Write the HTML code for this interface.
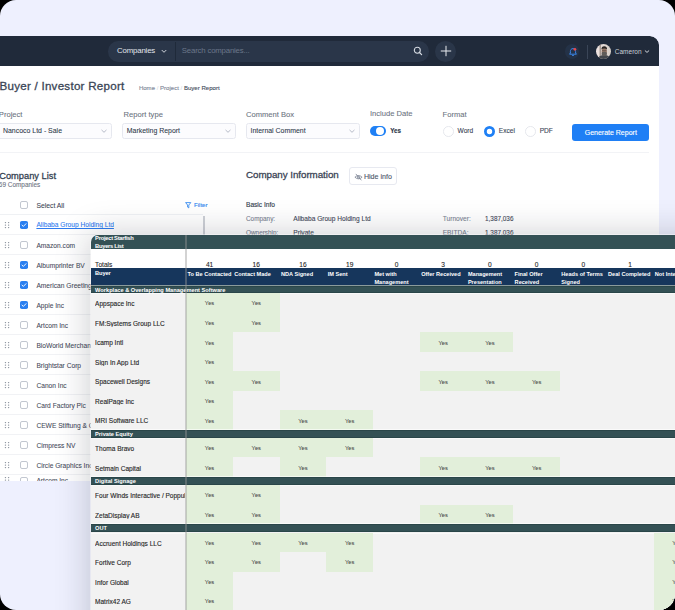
<!DOCTYPE html>
<html><head><meta charset="utf-8"><style>
html,body{margin:0;padding:0;background:#000;width:675px;height:610px;overflow:hidden;}
#frame{position:absolute;left:0;top:0;width:675px;height:610px;border-radius:16px;overflow:hidden;background:#EEF0FE;}
.r{position:absolute;}
.t{position:absolute;white-space:nowrap;line-height:1;font-family:"Liberation Sans", sans-serif;}
</style></head><body><div id="frame">
<div id="dash" style="position:absolute;left:0;top:36px;width:659px;height:445px;overflow:hidden;border-top-right-radius:9px;"><div style="position:absolute;left:0;top:-36px;width:675px;height:610px;"><div class="r" style="left:-20.00px;top:36.00px;width:679.00px;height:30.00px;background:#202A3A;border-top-right-radius:9px;"></div><div class="r" style="left:-20.00px;top:66.00px;width:679.00px;height:415.00px;background:#FFFFFF;"></div><div class="r" style="left:108.00px;top:41.00px;width:321.00px;height:20.50px;background:#2A3649;border-radius:10.25px;"></div><div class="r" style="left:175.00px;top:42.00px;width:1.00px;height:18.50px;background:#1F2A3A;"></div><div class="t" style="left:117.00px;top:46.86px;font-size:7.8px;color:#E2E6EC;font-weight:400;letter-spacing:-0.15px;">Companies</div><svg class="r" style="left:161px;top:48.5px" width="6" height="5" viewBox="0 0 6 5"><path d="M1 1.3 L3 3.3 L5 1.3" fill="none" stroke="#E2E6EC" stroke-width="0.9" stroke-linecap="round" stroke-linejoin="round"/></svg><div class="t" style="left:181.80px;top:47.01px;font-size:7.8px;color:#6B778A;font-weight:400;letter-spacing:-0.18px;">Search companies...</div><svg class="r" style="left:413px;top:46px" width="10" height="10" viewBox="0 0 10 10"><circle cx="4.3" cy="4.3" r="3" fill="none" stroke="#D5DAE1" stroke-width="1.1"/><path d="M6.5 6.5 L8.6 8.6" stroke="#D5DAE1" stroke-width="1.2" stroke-linecap="round"/></svg><div class="r" style="left:435.00px;top:40.80px;width:21.00px;height:21.00px;background:#2A3649;border-radius:50%;"></div><svg class="r" style="left:439.5px;top:45.3px" width="12" height="12" viewBox="0 0 12 12"><path d="M6 1.2 V10.8 M1.2 6 H10.8" stroke="#E8EBF0" stroke-width="1.0" stroke-linecap="round"/></svg><div class="r" style="left:564.70px;top:44.10px;width:14.80px;height:14.80px;background:#243247;border-radius:50%;"></div><svg class="r" style="left:567.5px;top:46.5px" width="10" height="10" viewBox="0 0 10 10"><path d="M5 1.6 C3.2 1.6 2.4 3 2.4 4.4 L2.4 6 L1.6 7.2 L8.4 7.2 L7.6 6 L7.6 4.4 C7.6 3 6.8 1.6 5 1.6 Z" fill="none" stroke="#3A86E8" stroke-width="1" stroke-linejoin="round"/><path d="M4 8.2 Q5 9.2 6 8.2" fill="none" stroke="#3A86E8" stroke-width="0.9"/><circle cx="6.9" cy="2.3" r="1.4" fill="#E5484D"/></svg><div class="r" style="left:587.30px;top:44.60px;width:0.80px;height:14.00px;background:#3A4557;"></div><svg class="r" style="left:595.6px;top:44.3px" width="15" height="15" viewBox="0 0 30 30"><defs><clipPath id="av"><circle cx="15" cy="15" r="15"/></clipPath><linearGradient id="avbg" x1="0" x2="1"><stop offset="0" stop-color="#EFE4E2"/><stop offset="1" stop-color="#D6CEC6"/></linearGradient></defs><g clip-path="url(#av)"><rect width="30" height="30" fill="url(#avbg)"/><rect x="7" y="0" width="3" height="30" fill="#6E5E55" opacity="0.55"/><ellipse cx="16.5" cy="31" rx="13" ry="9" fill="#43474C"/><ellipse cx="16.5" cy="14.5" rx="5.2" ry="7" fill="#967766"/><ellipse cx="16.5" cy="19.5" rx="5.4" ry="4.6" fill="#5F5C59"/><path d="M10.8 11 Q11 4.5 16.5 4.5 Q22 4.5 22.2 11 Q19 8.5 16.5 8.8 Q13.5 8.5 10.8 11 Z" fill="#2A2522"/><rect x="12" y="12" width="9" height="1.3" fill="#3A3430" opacity="0.6"/></g></svg><div class="t" style="left:614.80px;top:48.68px;font-size:6.5px;color:#C9CED6;font-weight:400;">Cameron</div><svg class="r" style="left:644px;top:49px" width="6" height="5" viewBox="0 0 6 5"><path d="M1.2 1.8 L3 3.4 L4.8 1.8" fill="none" stroke="#E2E6EC" stroke-width="0.9" stroke-linecap="round" stroke-linejoin="round"/></svg><div class="t" style="left:-0.50px;top:80.48px;font-size:11.6px;color:#3A4556;font-weight:400;letter-spacing:0.25px;-webkit-text-stroke:0.3px #3A4556;">Buyer / Investor Report</div><div class="t" style="left:138.90px;top:85.40px;font-size:6.05px;color:#858D9C;font-weight:400;-webkit-text-stroke:0.15px #858D9C;">Home <span style="color:#D0D4DB;-webkit-text-stroke:0">/</span> Project <span style="color:#D0D4DB;-webkit-text-stroke:0">/</span> <span style="color:#454E5E;-webkit-text-stroke:0.12px #454E5E">Buyer Report</span></div><div class="t" style="left:-1.20px;top:110.85px;font-size:7.6px;color:#6B7280;font-weight:400;-webkit-text-stroke:0.08px #6B7280;">Project</div><div class="t" style="left:123.60px;top:110.85px;font-size:7.6px;color:#6B7280;font-weight:400;-webkit-text-stroke:0.08px #6B7280;">Report type</div><div class="t" style="left:246.00px;top:110.85px;font-size:7.6px;color:#6B7280;font-weight:400;-webkit-text-stroke:0.08px #6B7280;">Comment Box</div><div class="t" style="left:369.90px;top:109.95px;font-size:7.6px;color:#6B7280;font-weight:400;-webkit-text-stroke:0.08px #6B7280;">Include Date</div><div class="t" style="left:442.60px;top:110.85px;font-size:7.6px;color:#6B7280;font-weight:400;-webkit-text-stroke:0.08px #6B7280;">Format</div><div class="r" style="left:-20.00px;top:123.40px;width:131.60px;height:15.60px;background:#FCFCFE;border:0.8px solid #E6E8EF;border-radius:2.5px;box-sizing:border-box;"></div><div class="t" style="left:3.00px;top:128.36px;font-size:6.95px;color:#2F3A4A;font-weight:400;-webkit-text-stroke:0.08px #2F3A4A;">Nancoco Ltd - Sale</div><svg class="r" style="left:100.6px;top:128.5px" width="6" height="5" viewBox="0 0 6 5"><path d="M0.8 1.2 L3 3.3 L5.2 1.2" fill="none" stroke="#A3A9B9" stroke-width="0.8" stroke-linecap="round" stroke-linejoin="round"/></svg><div class="r" style="left:122.30px;top:123.40px;width:113.30px;height:15.60px;background:#FCFCFE;border:0.8px solid #E6E8EF;border-radius:2.5px;box-sizing:border-box;"></div><div class="t" style="left:126.80px;top:128.36px;font-size:6.95px;color:#2F3A4A;font-weight:400;-webkit-text-stroke:0.08px #2F3A4A;">Marketing Report</div><svg class="r" style="left:224.6px;top:128.5px" width="6" height="5" viewBox="0 0 6 5"><path d="M0.8 1.2 L3 3.3 L5.2 1.2" fill="none" stroke="#A3A9B9" stroke-width="0.8" stroke-linecap="round" stroke-linejoin="round"/></svg><div class="r" style="left:246.00px;top:123.40px;width:113.50px;height:15.60px;background:#FCFCFE;border:0.8px solid #E6E8EF;border-radius:2.5px;box-sizing:border-box;"></div><div class="t" style="left:250.50px;top:128.36px;font-size:6.95px;color:#2F3A4A;font-weight:400;-webkit-text-stroke:0.08px #2F3A4A;">Internal Comment</div><svg class="r" style="left:348.5px;top:128.5px" width="6" height="5" viewBox="0 0 6 5"><path d="M0.8 1.2 L3 3.3 L5.2 1.2" fill="none" stroke="#A3A9B9" stroke-width="0.8" stroke-linecap="round" stroke-linejoin="round"/></svg><div class="r" style="left:369.90px;top:125.90px;width:16.00px;height:10.60px;background:#1F80F5;border-radius:5.3px;"></div><div class="r" style="left:375.80px;top:127.00px;width:8.40px;height:8.40px;background:#FFFFFF;border-radius:50%;"></div><div class="t" style="left:390.20px;top:128.48px;font-size:6.3px;color:#2E3648;font-weight:700;-webkit-text-stroke:0.12px #2E3648;">Yes</div><svg class="r" style="left:442.50px;top:125.80px" width="11" height="11" viewBox="0 0 11 11"><circle cx="5.5" cy="5.5" r="5.05" fill="#fff" stroke="#DFE2E8" stroke-width="0.8"/></svg><div class="t" style="left:457.60px;top:128.43px;font-size:6.6px;color:#3A4556;font-weight:400;-webkit-text-stroke:0.1px #3A4556;">Word</div><svg class="r" style="left:483.70px;top:125.80px" width="11" height="11" viewBox="0 0 11 11"><circle cx="5.5" cy="5.5" r="4.1" fill="#fff" stroke="#1F80F5" stroke-width="2.8"/></svg><div class="t" style="left:498.80px;top:128.43px;font-size:6.6px;color:#3A4556;font-weight:400;-webkit-text-stroke:0.1px #3A4556;">Excel</div><svg class="r" style="left:524.60px;top:125.80px" width="11" height="11" viewBox="0 0 11 11"><circle cx="5.5" cy="5.5" r="5.05" fill="#fff" stroke="#DFE2E8" stroke-width="0.8"/></svg><div class="t" style="left:539.70px;top:128.43px;font-size:6.6px;color:#3A4556;font-weight:400;-webkit-text-stroke:0.1px #3A4556;">PDF</div><div class="r" style="left:572.00px;top:123.60px;width:77.40px;height:17.00px;background:#1F7FF5;border-radius:3px;"></div><div class="t" style="left:584.70px;top:128.64px;font-size:7.0px;color:#FFFFFF;font-weight:400;-webkit-text-stroke:0.12px #FFFFFF;">Generate Report</div><div class="r" style="left:-20.00px;top:151.60px;width:669.30px;height:0.80px;background:#F2F3F6;"></div><div class="t" style="left:-0.80px;top:171.84px;font-size:9.3px;color:#343F50;font-weight:400;-webkit-text-stroke:0.28px #343F50;">Company List</div><div class="t" style="left:-1.20px;top:181.70px;font-size:6.45px;color:#6B7280;font-weight:400;-webkit-text-stroke:0.08px #6B7280;">69 Companies</div><div class="r" style="left:20.40px;top:200.50px;width:8.00px;height:8.00px;border:0.8px solid #C2C7D0;border-radius:2px;box-sizing:border-box;"></div><div class="t" style="left:36.40px;top:202.64px;font-size:6.8px;color:#374151;font-weight:400;-webkit-text-stroke:0.06px #374151;">Select All</div><svg class="r" style="left:184.8px;top:201.6px" width="7" height="7" viewBox="0 0 7 7"><path d="M0.6 0.6 H5.8 L3.8 3.0 V5.9 L2.6 5.1 V3.0 Z" fill="none" stroke="#2E86F0" stroke-width="0.85" stroke-linejoin="round"/></svg><div class="t" style="left:194.00px;top:201.87px;font-size:6.1px;color:#2E86F0;font-weight:400;-webkit-text-stroke:0.12px #2E86F0;">Filter</div><div class="r" style="left:-20.00px;top:214.20px;width:223.00px;height:0.70px;background:#EFF1F4;"></div><div class="r" style="left:202.90px;top:215.80px;width:1.80px;height:265.00px;background:#CDD0D6;"></div><svg class="r" style="left:4.3px;top:220.60px" width="6" height="8" viewBox="0 0 6 8"><g fill="#868D99"><circle cx="1.45" cy="1.6" r="0.72"/><circle cx="4.6" cy="1.6" r="0.72"/><circle cx="1.45" cy="4.1" r="0.72"/><circle cx="4.6" cy="4.1" r="0.72"/><circle cx="1.45" cy="6.6" r="0.72"/><circle cx="4.6" cy="6.6" r="0.72"/></g></svg><div class="r" style="left:20.40px;top:220.80px;width:8.00px;height:8.00px;background:#2A7FF0;border-radius:1.8px;"></div><svg class="r" style="left:20.4px;top:220.80px" width="8" height="8" viewBox="0 0 8 8"><path d="M2 4.1 L3.4 5.4 L6 2.7" fill="none" stroke="#fff" stroke-width="0.9" stroke-linecap="round" stroke-linejoin="round"/></svg><div class="t" style="left:36.40px;top:222.42px;font-size:6.62px;color:#2E7BEF;font-weight:400;text-decoration:underline;-webkit-text-stroke:0.08px #2E7BEF;">Alibaba Group Holding Ltd</div><div class="r" style="left:-20.00px;top:234.20px;width:223.00px;height:0.70px;background:#F1F2F5;"></div><svg class="r" style="left:4.3px;top:240.60px" width="6" height="8" viewBox="0 0 6 8"><g fill="#868D99"><circle cx="1.45" cy="1.6" r="0.72"/><circle cx="4.6" cy="1.6" r="0.72"/><circle cx="1.45" cy="4.1" r="0.72"/><circle cx="4.6" cy="4.1" r="0.72"/><circle cx="1.45" cy="6.6" r="0.72"/><circle cx="4.6" cy="6.6" r="0.72"/></g></svg><div class="r" style="left:20.40px;top:240.80px;width:8.00px;height:8.00px;border:0.8px solid #C2C7D0;border-radius:2px;box-sizing:border-box;background:#fff;"></div><div class="t" style="left:36.40px;top:242.61px;font-size:6.65px;color:#3F4858;font-weight:400;-webkit-text-stroke:0.06px #3F4858;">Amazon.com</div><div class="r" style="left:-20.00px;top:254.20px;width:223.00px;height:0.70px;background:#F1F2F5;"></div><svg class="r" style="left:4.3px;top:260.60px" width="6" height="8" viewBox="0 0 6 8"><g fill="#868D99"><circle cx="1.45" cy="1.6" r="0.72"/><circle cx="4.6" cy="1.6" r="0.72"/><circle cx="1.45" cy="4.1" r="0.72"/><circle cx="4.6" cy="4.1" r="0.72"/><circle cx="1.45" cy="6.6" r="0.72"/><circle cx="4.6" cy="6.6" r="0.72"/></g></svg><div class="r" style="left:20.40px;top:260.80px;width:8.00px;height:8.00px;background:#2A7FF0;border-radius:1.8px;"></div><svg class="r" style="left:20.4px;top:260.80px" width="8" height="8" viewBox="0 0 8 8"><path d="M2 4.1 L3.4 5.4 L6 2.7" fill="none" stroke="#fff" stroke-width="0.9" stroke-linecap="round" stroke-linejoin="round"/></svg><div class="t" style="left:36.40px;top:262.61px;font-size:6.65px;color:#3F4858;font-weight:400;-webkit-text-stroke:0.06px #3F4858;">Albumprinter BV</div><div class="r" style="left:-20.00px;top:274.20px;width:223.00px;height:0.70px;background:#F1F2F5;"></div><svg class="r" style="left:4.3px;top:280.60px" width="6" height="8" viewBox="0 0 6 8"><g fill="#868D99"><circle cx="1.45" cy="1.6" r="0.72"/><circle cx="4.6" cy="1.6" r="0.72"/><circle cx="1.45" cy="4.1" r="0.72"/><circle cx="4.6" cy="4.1" r="0.72"/><circle cx="1.45" cy="6.6" r="0.72"/><circle cx="4.6" cy="6.6" r="0.72"/></g></svg><div class="r" style="left:20.40px;top:280.80px;width:8.00px;height:8.00px;background:#2A7FF0;border-radius:1.8px;"></div><svg class="r" style="left:20.4px;top:280.80px" width="8" height="8" viewBox="0 0 8 8"><path d="M2 4.1 L3.4 5.4 L6 2.7" fill="none" stroke="#fff" stroke-width="0.9" stroke-linecap="round" stroke-linejoin="round"/></svg><div class="t" style="left:36.40px;top:282.61px;font-size:6.65px;color:#3F4858;font-weight:400;-webkit-text-stroke:0.06px #3F4858;">American Greetings</div><div class="r" style="left:-20.00px;top:294.20px;width:223.00px;height:0.70px;background:#F1F2F5;"></div><svg class="r" style="left:4.3px;top:300.60px" width="6" height="8" viewBox="0 0 6 8"><g fill="#868D99"><circle cx="1.45" cy="1.6" r="0.72"/><circle cx="4.6" cy="1.6" r="0.72"/><circle cx="1.45" cy="4.1" r="0.72"/><circle cx="4.6" cy="4.1" r="0.72"/><circle cx="1.45" cy="6.6" r="0.72"/><circle cx="4.6" cy="6.6" r="0.72"/></g></svg><div class="r" style="left:20.40px;top:300.80px;width:8.00px;height:8.00px;background:#2A7FF0;border-radius:1.8px;"></div><svg class="r" style="left:20.4px;top:300.80px" width="8" height="8" viewBox="0 0 8 8"><path d="M2 4.1 L3.4 5.4 L6 2.7" fill="none" stroke="#fff" stroke-width="0.9" stroke-linecap="round" stroke-linejoin="round"/></svg><div class="t" style="left:36.40px;top:302.61px;font-size:6.65px;color:#3F4858;font-weight:400;-webkit-text-stroke:0.06px #3F4858;">Apple Inc</div><div class="r" style="left:-20.00px;top:314.20px;width:223.00px;height:0.70px;background:#F1F2F5;"></div><svg class="r" style="left:4.3px;top:320.60px" width="6" height="8" viewBox="0 0 6 8"><g fill="#868D99"><circle cx="1.45" cy="1.6" r="0.72"/><circle cx="4.6" cy="1.6" r="0.72"/><circle cx="1.45" cy="4.1" r="0.72"/><circle cx="4.6" cy="4.1" r="0.72"/><circle cx="1.45" cy="6.6" r="0.72"/><circle cx="4.6" cy="6.6" r="0.72"/></g></svg><div class="r" style="left:20.40px;top:320.80px;width:8.00px;height:8.00px;border:0.8px solid #C2C7D0;border-radius:2px;box-sizing:border-box;background:#fff;"></div><div class="t" style="left:36.40px;top:322.61px;font-size:6.65px;color:#3F4858;font-weight:400;-webkit-text-stroke:0.06px #3F4858;">Artcom Inc</div><div class="r" style="left:-20.00px;top:334.20px;width:223.00px;height:0.70px;background:#F1F2F5;"></div><svg class="r" style="left:4.3px;top:340.60px" width="6" height="8" viewBox="0 0 6 8"><g fill="#868D99"><circle cx="1.45" cy="1.6" r="0.72"/><circle cx="4.6" cy="1.6" r="0.72"/><circle cx="1.45" cy="4.1" r="0.72"/><circle cx="4.6" cy="4.1" r="0.72"/><circle cx="1.45" cy="6.6" r="0.72"/><circle cx="4.6" cy="6.6" r="0.72"/></g></svg><div class="r" style="left:20.40px;top:340.80px;width:8.00px;height:8.00px;border:0.8px solid #C2C7D0;border-radius:2px;box-sizing:border-box;background:#fff;"></div><div class="t" style="left:36.40px;top:342.61px;font-size:6.65px;color:#3F4858;font-weight:400;-webkit-text-stroke:0.06px #3F4858;">BioWorld Merchandising</div><div class="r" style="left:-20.00px;top:354.20px;width:223.00px;height:0.70px;background:#F1F2F5;"></div><svg class="r" style="left:4.3px;top:360.60px" width="6" height="8" viewBox="0 0 6 8"><g fill="#868D99"><circle cx="1.45" cy="1.6" r="0.72"/><circle cx="4.6" cy="1.6" r="0.72"/><circle cx="1.45" cy="4.1" r="0.72"/><circle cx="4.6" cy="4.1" r="0.72"/><circle cx="1.45" cy="6.6" r="0.72"/><circle cx="4.6" cy="6.6" r="0.72"/></g></svg><div class="r" style="left:20.40px;top:360.80px;width:8.00px;height:8.00px;border:0.8px solid #C2C7D0;border-radius:2px;box-sizing:border-box;background:#fff;"></div><div class="t" style="left:36.40px;top:362.61px;font-size:6.65px;color:#3F4858;font-weight:400;-webkit-text-stroke:0.06px #3F4858;">Brightstar Corp</div><div class="r" style="left:-20.00px;top:374.20px;width:223.00px;height:0.70px;background:#F1F2F5;"></div><svg class="r" style="left:4.3px;top:380.60px" width="6" height="8" viewBox="0 0 6 8"><g fill="#868D99"><circle cx="1.45" cy="1.6" r="0.72"/><circle cx="4.6" cy="1.6" r="0.72"/><circle cx="1.45" cy="4.1" r="0.72"/><circle cx="4.6" cy="4.1" r="0.72"/><circle cx="1.45" cy="6.6" r="0.72"/><circle cx="4.6" cy="6.6" r="0.72"/></g></svg><div class="r" style="left:20.40px;top:380.80px;width:8.00px;height:8.00px;border:0.8px solid #C2C7D0;border-radius:2px;box-sizing:border-box;background:#fff;"></div><div class="t" style="left:36.40px;top:382.61px;font-size:6.65px;color:#3F4858;font-weight:400;-webkit-text-stroke:0.06px #3F4858;">Canon Inc</div><div class="r" style="left:-20.00px;top:394.20px;width:223.00px;height:0.70px;background:#F1F2F5;"></div><svg class="r" style="left:4.3px;top:400.60px" width="6" height="8" viewBox="0 0 6 8"><g fill="#868D99"><circle cx="1.45" cy="1.6" r="0.72"/><circle cx="4.6" cy="1.6" r="0.72"/><circle cx="1.45" cy="4.1" r="0.72"/><circle cx="4.6" cy="4.1" r="0.72"/><circle cx="1.45" cy="6.6" r="0.72"/><circle cx="4.6" cy="6.6" r="0.72"/></g></svg><div class="r" style="left:20.40px;top:400.80px;width:8.00px;height:8.00px;border:0.8px solid #C2C7D0;border-radius:2px;box-sizing:border-box;background:#fff;"></div><div class="t" style="left:36.40px;top:402.61px;font-size:6.65px;color:#3F4858;font-weight:400;-webkit-text-stroke:0.06px #3F4858;">Card Factory Plc</div><div class="r" style="left:-20.00px;top:414.20px;width:223.00px;height:0.70px;background:#F1F2F5;"></div><svg class="r" style="left:4.3px;top:420.60px" width="6" height="8" viewBox="0 0 6 8"><g fill="#868D99"><circle cx="1.45" cy="1.6" r="0.72"/><circle cx="4.6" cy="1.6" r="0.72"/><circle cx="1.45" cy="4.1" r="0.72"/><circle cx="4.6" cy="4.1" r="0.72"/><circle cx="1.45" cy="6.6" r="0.72"/><circle cx="4.6" cy="6.6" r="0.72"/></g></svg><div class="r" style="left:20.40px;top:420.80px;width:8.00px;height:8.00px;border:0.8px solid #C2C7D0;border-radius:2px;box-sizing:border-box;background:#fff;"></div><div class="t" style="left:36.40px;top:422.61px;font-size:6.65px;color:#3F4858;font-weight:400;-webkit-text-stroke:0.06px #3F4858;">CEWE Stiftung &amp; Co</div><div class="r" style="left:-20.00px;top:434.20px;width:223.00px;height:0.70px;background:#F1F2F5;"></div><svg class="r" style="left:4.3px;top:440.60px" width="6" height="8" viewBox="0 0 6 8"><g fill="#868D99"><circle cx="1.45" cy="1.6" r="0.72"/><circle cx="4.6" cy="1.6" r="0.72"/><circle cx="1.45" cy="4.1" r="0.72"/><circle cx="4.6" cy="4.1" r="0.72"/><circle cx="1.45" cy="6.6" r="0.72"/><circle cx="4.6" cy="6.6" r="0.72"/></g></svg><div class="r" style="left:20.40px;top:440.80px;width:8.00px;height:8.00px;border:0.8px solid #C2C7D0;border-radius:2px;box-sizing:border-box;background:#fff;"></div><div class="t" style="left:36.40px;top:442.61px;font-size:6.65px;color:#3F4858;font-weight:400;-webkit-text-stroke:0.06px #3F4858;">Cimpress NV</div><div class="r" style="left:-20.00px;top:454.20px;width:223.00px;height:0.70px;background:#F1F2F5;"></div><svg class="r" style="left:4.3px;top:460.60px" width="6" height="8" viewBox="0 0 6 8"><g fill="#868D99"><circle cx="1.45" cy="1.6" r="0.72"/><circle cx="4.6" cy="1.6" r="0.72"/><circle cx="1.45" cy="4.1" r="0.72"/><circle cx="4.6" cy="4.1" r="0.72"/><circle cx="1.45" cy="6.6" r="0.72"/><circle cx="4.6" cy="6.6" r="0.72"/></g></svg><div class="r" style="left:20.40px;top:460.80px;width:8.00px;height:8.00px;border:0.8px solid #C2C7D0;border-radius:2px;box-sizing:border-box;background:#fff;"></div><div class="t" style="left:36.40px;top:462.61px;font-size:6.65px;color:#3F4858;font-weight:400;-webkit-text-stroke:0.06px #3F4858;">Circle Graphics Inc</div><div class="r" style="left:-20.00px;top:474.20px;width:223.00px;height:0.70px;background:#F1F2F5;"></div><svg class="r" style="left:4.3px;top:476.40px" width="6" height="8" viewBox="0 0 6 8"><g fill="#868D99"><circle cx="1.45" cy="1.6" r="0.72"/><circle cx="4.6" cy="1.6" r="0.72"/><circle cx="1.45" cy="4.1" r="0.72"/><circle cx="4.6" cy="4.1" r="0.72"/><circle cx="1.45" cy="6.6" r="0.72"/><circle cx="4.6" cy="6.6" r="0.72"/></g></svg><div class="r" style="left:20.40px;top:476.60px;width:8.00px;height:8.00px;border:0.8px solid #C2C7D0;border-radius:2px;box-sizing:border-box;background:#fff;"></div><div class="t" style="left:36.40px;top:478.41px;font-size:6.65px;color:#3F4858;font-weight:400;-webkit-text-stroke:0.06px #3F4858;">Artcom Inc</div><div class="r" style="left:-20.00px;top:490.00px;width:223.00px;height:0.70px;background:#F1F2F5;"></div><div class="t" style="left:246.00px;top:170.20px;font-size:9.8px;color:#3A4354;font-weight:400;letter-spacing:-0.05px;-webkit-text-stroke:0.28px #3A4354;">Company Information</div><div class="r" style="left:348.50px;top:167.30px;width:48.00px;height:17.60px;border:0.8px solid #E7E9F0;border-radius:3px;box-sizing:border-box;"></div><svg class="r" style="left:353.6px;top:172.6px" width="9" height="8" viewBox="0 0 9 8"><path d="M0.9 4.2 Q4.5 0.9 8.1 4.2 Q4.5 7.5 0.9 4.2 Z" fill="none" stroke="#737B8C" stroke-width="0.75"/><circle cx="4.5" cy="4.2" r="1.1" fill="none" stroke="#737B8C" stroke-width="0.7"/><path d="M1.8 0.9 L7.4 7.3" stroke="#737B8C" stroke-width="0.75"/></svg><div class="t" style="left:363.90px;top:173.59px;font-size:7.1px;color:#4A5468;font-weight:400;-webkit-text-stroke:0.1px #4A5468;">Hide info</div><div class="t" style="left:246.00px;top:201.73px;font-size:6.6px;color:#343F50;font-weight:400;-webkit-text-stroke:0.14px #343F50;">Basic Info</div><div class="t" style="left:246.00px;top:215.63px;font-size:6.4px;color:#7A8291;font-weight:400;-webkit-text-stroke:0.08px #7A8291;">Company:</div><div class="t" style="left:293.30px;top:215.53px;font-size:6.6px;color:#3F4858;font-weight:400;-webkit-text-stroke:0.1px #3F4858;">Alibaba Group Holding Ltd</div><div class="t" style="left:246.00px;top:229.63px;font-size:6.4px;color:#7A8291;font-weight:400;-webkit-text-stroke:0.08px #7A8291;">Ownership:</div><div class="t" style="left:293.30px;top:229.53px;font-size:6.6px;color:#3F4858;font-weight:400;-webkit-text-stroke:0.1px #3F4858;">Private</div><div class="t" style="left:442.70px;top:215.51px;font-size:6.65px;color:#7A8291;font-weight:400;-webkit-text-stroke:0.08px #7A8291;">Turnover:</div><div class="t" style="left:485.00px;top:215.63px;font-size:6.4px;color:#3F4858;font-weight:400;-webkit-text-stroke:0.1px #3F4858;">1,387,036</div><div class="t" style="left:442.70px;top:229.61px;font-size:6.65px;color:#7A8291;font-weight:400;-webkit-text-stroke:0.08px #7A8291;">EBITDA:</div><div class="t" style="left:485.00px;top:229.73px;font-size:6.4px;color:#3F4858;font-weight:400;-webkit-text-stroke:0.1px #3F4858;">1,387,036</div></div></div>
<div id="ov" style="position:absolute;left:91px;top:235px;width:700px;height:500px;border-top-left-radius:7px;overflow:hidden;box-shadow:0 0 0 0.8px rgba(255,255,255,0.55), -2px -1px 34px rgba(20,22,40,0.21);background:#F2F2F2;"><div class="r" style="left:0.00px;top:0.00px;width:600.00px;height:14.00px;background:#345155;"></div><div class="t" style="left:4.10px;top:0.72px;font-size:5.8px;color:#FFFFFF;font-weight:700;letter-spacing:-0.28px;">Project Starfish</div><div class="t" style="left:4.10px;top:8.62px;font-size:5.8px;color:#FFFFFF;font-weight:700;letter-spacing:-0.3px;">Buyers List</div><div class="r" style="left:0.00px;top:14.40px;width:600.00px;height:18.60px;background:#FFFFFF;"></div><div class="t" style="left:4.10px;top:26.63px;font-size:6.6px;color:#262626;font-weight:400;-webkit-text-stroke:0.1px #262626;">Totals</div><div class="t" style="left:95.20px;width:46.73px;text-align:center;top:26.73px;font-size:6.6px;color:#262626;-webkit-text-stroke:0.1px #262626">41</div><div class="t" style="left:141.93px;width:46.73px;text-align:center;top:26.73px;font-size:6.6px;color:#262626;-webkit-text-stroke:0.1px #262626">16</div><div class="t" style="left:188.66px;width:46.73px;text-align:center;top:26.73px;font-size:6.6px;color:#262626;-webkit-text-stroke:0.1px #262626">16</div><div class="t" style="left:235.39px;width:46.73px;text-align:center;top:26.73px;font-size:6.6px;color:#262626;-webkit-text-stroke:0.1px #262626">19</div><div class="t" style="left:282.12px;width:46.73px;text-align:center;top:26.73px;font-size:6.6px;color:#262626;-webkit-text-stroke:0.1px #262626">0</div><div class="t" style="left:328.85px;width:46.73px;text-align:center;top:26.73px;font-size:6.6px;color:#262626;-webkit-text-stroke:0.1px #262626">3</div><div class="t" style="left:375.58px;width:46.73px;text-align:center;top:26.73px;font-size:6.6px;color:#262626;-webkit-text-stroke:0.1px #262626">0</div><div class="t" style="left:422.31px;width:46.73px;text-align:center;top:26.73px;font-size:6.6px;color:#262626;-webkit-text-stroke:0.1px #262626">0</div><div class="t" style="left:469.04px;width:46.73px;text-align:center;top:26.73px;font-size:6.6px;color:#262626;-webkit-text-stroke:0.1px #262626">0</div><div class="t" style="left:515.77px;width:46.73px;text-align:center;top:26.73px;font-size:6.6px;color:#262626;-webkit-text-stroke:0.1px #262626">1</div><div class="t" style="left:562.50px;width:46.73px;text-align:center;top:26.73px;font-size:6.6px;color:#262626;-webkit-text-stroke:0.1px #262626">1</div><div class="r" style="left:0.00px;top:32.95px;width:600.00px;height:16.80px;background:#16365C;"></div><div class="t" style="left:4.10px;top:36.36px;font-size:5.7px;color:#FFFFFF;font-weight:700;letter-spacing:-0.15px;">Buyer</div><div class="t" style="left:96.50px;top:36.01px;font-size:5.6px;line-height:8.4px;color:#FFFFFF;font-weight:700;margin-top:-1.4px">To Be Contacted</div><div class="t" style="left:143.23px;top:36.01px;font-size:5.6px;line-height:8.4px;color:#FFFFFF;font-weight:700;margin-top:-1.4px">Contact Made</div><div class="t" style="left:189.96px;top:36.01px;font-size:5.6px;line-height:8.4px;color:#FFFFFF;font-weight:700;margin-top:-1.4px">NDA Signed</div><div class="t" style="left:236.69px;top:36.01px;font-size:5.6px;line-height:8.4px;color:#FFFFFF;font-weight:700;margin-top:-1.4px">IM Sent</div><div class="t" style="left:283.42px;top:36.01px;font-size:5.6px;line-height:8.4px;color:#FFFFFF;font-weight:700;margin-top:-1.4px">Met with<br>Management</div><div class="t" style="left:330.15px;top:36.01px;font-size:5.6px;line-height:8.4px;color:#FFFFFF;font-weight:700;margin-top:-1.4px">Offer Received</div><div class="t" style="left:376.88px;top:36.01px;font-size:5.6px;line-height:8.4px;color:#FFFFFF;font-weight:700;margin-top:-1.4px">Management<br>Presentation</div><div class="t" style="left:423.61px;top:36.01px;font-size:5.6px;line-height:8.4px;color:#FFFFFF;font-weight:700;margin-top:-1.4px">Final Offer<br>Received</div><div class="t" style="left:470.34px;top:36.01px;font-size:5.6px;line-height:8.4px;color:#FFFFFF;font-weight:700;margin-top:-1.4px">Heads of Terms<br>Signed</div><div class="t" style="left:517.07px;top:36.01px;font-size:5.6px;line-height:8.4px;color:#FFFFFF;font-weight:700;margin-top:-1.4px">Deal Completed</div><div class="t" style="left:563.80px;top:36.01px;font-size:5.6px;line-height:8.4px;color:#FFFFFF;font-weight:700;margin-top:-1.4px">Not Interested</div><div class="r" style="left:0.00px;top:49.90px;width:600.00px;height:400.00px;background:#F2F2F2;"></div><div class="r" style="left:0.00px;top:49.75px;width:600.00px;height:1.35px;background:#8A9A9C;"></div><div class="r" style="left:0.00px;top:51.10px;width:600.00px;height:7.00px;background:#345155;border-top:0.6px solid #2A4649;border-bottom:0.6px solid #2A4649;box-sizing:border-box;"></div><div class="r" style="left:0.00px;top:58.10px;width:600.00px;height:0.90px;background:rgba(255,255,255,0.5);"></div><div class="t" style="left:4.10px;top:52.78px;font-size:5.67px;color:#FFFFFF;font-weight:700;">Workplace &amp; Overlapping Management Software</div><div class="r" style="left:95.20px;top:58.10px;width:46.73px;height:19.53px;background:#E2EFDA;"></div><div class="r" style="left:141.93px;top:58.10px;width:46.73px;height:19.53px;background:#E2EFDA;"></div><div class="t" style="left:95.20px;width:46.73px;text-align:center;top:66.48px;font-size:5.8px;color:#474747;-webkit-text-stroke:0.05px #474747">Yes</div><div class="t" style="left:141.93px;width:46.73px;text-align:center;top:66.48px;font-size:5.8px;color:#474747;-webkit-text-stroke:0.05px #474747">Yes</div><div class="t" style="left:4.10px;top:66.24px;font-size:6.5px;color:#262626;-webkit-text-stroke:0.12px #262626;width:90.40px;overflow:hidden">Appspace Inc</div><div class="r" style="left:95.20px;top:77.63px;width:46.73px;height:19.53px;background:#E2EFDA;"></div><div class="r" style="left:141.93px;top:77.63px;width:46.73px;height:19.53px;background:#E2EFDA;"></div><div class="t" style="left:95.20px;width:46.73px;text-align:center;top:86.01px;font-size:5.8px;color:#474747;-webkit-text-stroke:0.05px #474747">Yes</div><div class="t" style="left:141.93px;width:46.73px;text-align:center;top:86.01px;font-size:5.8px;color:#474747;-webkit-text-stroke:0.05px #474747">Yes</div><div class="t" style="left:4.10px;top:85.77px;font-size:6.5px;color:#262626;-webkit-text-stroke:0.12px #262626;width:90.40px;overflow:hidden">FM:Systems Group LLC</div><div class="r" style="left:95.20px;top:97.16px;width:46.73px;height:19.53px;background:#E2EFDA;"></div><div class="r" style="left:328.85px;top:97.16px;width:46.73px;height:19.53px;background:#E2EFDA;"></div><div class="r" style="left:375.58px;top:97.16px;width:46.73px;height:19.53px;background:#E2EFDA;"></div><div class="t" style="left:95.20px;width:46.73px;text-align:center;top:105.54px;font-size:5.8px;color:#474747;-webkit-text-stroke:0.05px #474747">Yes</div><div class="t" style="left:328.85px;width:46.73px;text-align:center;top:105.54px;font-size:5.8px;color:#474747;-webkit-text-stroke:0.05px #474747">Yes</div><div class="t" style="left:375.58px;width:46.73px;text-align:center;top:105.54px;font-size:5.8px;color:#474747;-webkit-text-stroke:0.05px #474747">Yes</div><div class="t" style="left:4.10px;top:105.30px;font-size:6.5px;color:#262626;-webkit-text-stroke:0.12px #262626;width:90.40px;overflow:hidden">Icamp Intl</div><div class="r" style="left:95.20px;top:116.69px;width:46.73px;height:19.53px;background:#E2EFDA;"></div><div class="t" style="left:95.20px;width:46.73px;text-align:center;top:125.07px;font-size:5.8px;color:#474747;-webkit-text-stroke:0.05px #474747">Yes</div><div class="t" style="left:4.10px;top:124.83px;font-size:6.5px;color:#262626;-webkit-text-stroke:0.12px #262626;width:90.40px;overflow:hidden">Sign In App Ltd</div><div class="r" style="left:95.20px;top:136.21px;width:46.73px;height:19.53px;background:#E2EFDA;"></div><div class="r" style="left:141.93px;top:136.21px;width:46.73px;height:19.53px;background:#E2EFDA;"></div><div class="r" style="left:328.85px;top:136.21px;width:46.73px;height:19.53px;background:#E2EFDA;"></div><div class="r" style="left:375.58px;top:136.21px;width:46.73px;height:19.53px;background:#E2EFDA;"></div><div class="r" style="left:422.31px;top:136.21px;width:46.73px;height:19.53px;background:#E2EFDA;"></div><div class="t" style="left:95.20px;width:46.73px;text-align:center;top:144.59px;font-size:5.8px;color:#474747;-webkit-text-stroke:0.05px #474747">Yes</div><div class="t" style="left:141.93px;width:46.73px;text-align:center;top:144.59px;font-size:5.8px;color:#474747;-webkit-text-stroke:0.05px #474747">Yes</div><div class="t" style="left:328.85px;width:46.73px;text-align:center;top:144.59px;font-size:5.8px;color:#474747;-webkit-text-stroke:0.05px #474747">Yes</div><div class="t" style="left:375.58px;width:46.73px;text-align:center;top:144.59px;font-size:5.8px;color:#474747;-webkit-text-stroke:0.05px #474747">Yes</div><div class="t" style="left:422.31px;width:46.73px;text-align:center;top:144.59px;font-size:5.8px;color:#474747;-webkit-text-stroke:0.05px #474747">Yes</div><div class="t" style="left:4.10px;top:144.36px;font-size:6.5px;color:#262626;-webkit-text-stroke:0.12px #262626;width:90.40px;overflow:hidden">Spacewell Designs</div><div class="r" style="left:95.20px;top:155.74px;width:46.73px;height:19.53px;background:#E2EFDA;"></div><div class="t" style="left:95.20px;width:46.73px;text-align:center;top:164.12px;font-size:5.8px;color:#474747;-webkit-text-stroke:0.05px #474747">Yes</div><div class="t" style="left:4.10px;top:163.89px;font-size:6.5px;color:#262626;-webkit-text-stroke:0.12px #262626;width:90.40px;overflow:hidden">RealPage Inc</div><div class="r" style="left:95.20px;top:175.27px;width:46.73px;height:19.53px;background:#E2EFDA;"></div><div class="r" style="left:188.66px;top:175.27px;width:46.73px;height:19.53px;background:#E2EFDA;"></div><div class="r" style="left:235.39px;top:175.27px;width:46.73px;height:19.53px;background:#E2EFDA;"></div><div class="t" style="left:95.20px;width:46.73px;text-align:center;top:183.65px;font-size:5.8px;color:#474747;-webkit-text-stroke:0.05px #474747">Yes</div><div class="t" style="left:188.66px;width:46.73px;text-align:center;top:183.65px;font-size:5.8px;color:#474747;-webkit-text-stroke:0.05px #474747">Yes</div><div class="t" style="left:235.39px;width:46.73px;text-align:center;top:183.65px;font-size:5.8px;color:#474747;-webkit-text-stroke:0.05px #474747">Yes</div><div class="t" style="left:4.10px;top:183.42px;font-size:6.5px;color:#262626;-webkit-text-stroke:0.12px #262626;width:90.40px;overflow:hidden">MRI Software LLC</div><div class="r" style="left:0.00px;top:194.80px;width:600.00px;height:8.20px;background:#345155;border-top:0.6px solid #2A4649;border-bottom:0.6px solid #2A4649;box-sizing:border-box;"></div><div class="r" style="left:0.00px;top:193.90px;width:600.00px;height:0.90px;background:rgba(255,255,255,0.6);"></div><div class="r" style="left:0.00px;top:203.00px;width:600.00px;height:0.90px;background:rgba(255,255,255,0.5);"></div><div class="t" style="left:4.10px;top:196.68px;font-size:5.67px;color:#FFFFFF;font-weight:700;">Private Equity</div><div class="r" style="left:95.20px;top:203.00px;width:46.73px;height:19.45px;background:#E2EFDA;"></div><div class="r" style="left:141.93px;top:203.00px;width:46.73px;height:19.45px;background:#E2EFDA;"></div><div class="r" style="left:188.66px;top:203.00px;width:46.73px;height:19.45px;background:#E2EFDA;"></div><div class="r" style="left:235.39px;top:203.00px;width:46.73px;height:19.45px;background:#E2EFDA;"></div><div class="t" style="left:95.20px;width:46.73px;text-align:center;top:211.34px;font-size:5.8px;color:#474747;-webkit-text-stroke:0.05px #474747">Yes</div><div class="t" style="left:141.93px;width:46.73px;text-align:center;top:211.34px;font-size:5.8px;color:#474747;-webkit-text-stroke:0.05px #474747">Yes</div><div class="t" style="left:188.66px;width:46.73px;text-align:center;top:211.34px;font-size:5.8px;color:#474747;-webkit-text-stroke:0.05px #474747">Yes</div><div class="t" style="left:235.39px;width:46.73px;text-align:center;top:211.34px;font-size:5.8px;color:#474747;-webkit-text-stroke:0.05px #474747">Yes</div><div class="t" style="left:4.10px;top:211.11px;font-size:6.5px;color:#262626;-webkit-text-stroke:0.12px #262626;width:90.40px;overflow:hidden">Thoma Bravo</div><div class="r" style="left:95.20px;top:222.45px;width:46.73px;height:19.45px;background:#E2EFDA;"></div><div class="r" style="left:188.66px;top:222.45px;width:46.73px;height:19.45px;background:#E2EFDA;"></div><div class="r" style="left:328.85px;top:222.45px;width:46.73px;height:19.45px;background:#E2EFDA;"></div><div class="r" style="left:375.58px;top:222.45px;width:46.73px;height:19.45px;background:#E2EFDA;"></div><div class="r" style="left:422.31px;top:222.45px;width:46.73px;height:19.45px;background:#E2EFDA;"></div><div class="t" style="left:95.20px;width:46.73px;text-align:center;top:230.79px;font-size:5.8px;color:#474747;-webkit-text-stroke:0.05px #474747">Yes</div><div class="t" style="left:188.66px;width:46.73px;text-align:center;top:230.79px;font-size:5.8px;color:#474747;-webkit-text-stroke:0.05px #474747">Yes</div><div class="t" style="left:328.85px;width:46.73px;text-align:center;top:230.79px;font-size:5.8px;color:#474747;-webkit-text-stroke:0.05px #474747">Yes</div><div class="t" style="left:375.58px;width:46.73px;text-align:center;top:230.79px;font-size:5.8px;color:#474747;-webkit-text-stroke:0.05px #474747">Yes</div><div class="t" style="left:422.31px;width:46.73px;text-align:center;top:230.79px;font-size:5.8px;color:#474747;-webkit-text-stroke:0.05px #474747">Yes</div><div class="t" style="left:4.10px;top:230.55px;font-size:6.5px;color:#262626;-webkit-text-stroke:0.12px #262626;width:90.40px;overflow:hidden">Setmain Capital</div><div class="r" style="left:0.00px;top:241.90px;width:600.00px;height:8.20px;background:#345155;border-top:0.6px solid #2A4649;border-bottom:0.6px solid #2A4649;box-sizing:border-box;"></div><div class="r" style="left:0.00px;top:241.00px;width:600.00px;height:0.90px;background:rgba(255,255,255,0.6);"></div><div class="r" style="left:0.00px;top:250.10px;width:600.00px;height:0.90px;background:rgba(255,255,255,0.5);"></div><div class="t" style="left:4.10px;top:243.78px;font-size:5.67px;color:#FFFFFF;font-weight:700;">Digital Signage</div><div class="r" style="left:95.20px;top:250.10px;width:46.73px;height:19.50px;background:#E2EFDA;"></div><div class="r" style="left:141.93px;top:250.10px;width:46.73px;height:19.50px;background:#E2EFDA;"></div><div class="t" style="left:95.20px;width:46.73px;text-align:center;top:258.47px;font-size:5.8px;color:#474747;-webkit-text-stroke:0.05px #474747">Yes</div><div class="t" style="left:141.93px;width:46.73px;text-align:center;top:258.47px;font-size:5.8px;color:#474747;-webkit-text-stroke:0.05px #474747">Yes</div><div class="t" style="left:4.10px;top:258.23px;font-size:6.5px;color:#262626;-webkit-text-stroke:0.12px #262626;width:90.40px;overflow:hidden">Four Winds Interactive / Poppulo</div><div class="r" style="left:95.20px;top:269.60px;width:46.73px;height:19.50px;background:#E2EFDA;"></div><div class="r" style="left:141.93px;top:269.60px;width:46.73px;height:19.50px;background:#E2EFDA;"></div><div class="r" style="left:328.85px;top:269.60px;width:46.73px;height:19.50px;background:#E2EFDA;"></div><div class="r" style="left:375.58px;top:269.60px;width:46.73px;height:19.50px;background:#E2EFDA;"></div><div class="t" style="left:95.20px;width:46.73px;text-align:center;top:277.97px;font-size:5.8px;color:#474747;-webkit-text-stroke:0.05px #474747">Yes</div><div class="t" style="left:141.93px;width:46.73px;text-align:center;top:277.97px;font-size:5.8px;color:#474747;-webkit-text-stroke:0.05px #474747">Yes</div><div class="t" style="left:328.85px;width:46.73px;text-align:center;top:277.97px;font-size:5.8px;color:#474747;-webkit-text-stroke:0.05px #474747">Yes</div><div class="t" style="left:375.58px;width:46.73px;text-align:center;top:277.97px;font-size:5.8px;color:#474747;-webkit-text-stroke:0.05px #474747">Yes</div><div class="t" style="left:4.10px;top:277.73px;font-size:6.5px;color:#262626;-webkit-text-stroke:0.12px #262626;width:90.40px;overflow:hidden">ZetaDisplay AB</div><div class="r" style="left:0.00px;top:289.10px;width:600.00px;height:8.40px;background:#345155;border-top:0.6px solid #2A4649;border-bottom:0.6px solid #2A4649;box-sizing:border-box;"></div><div class="r" style="left:0.00px;top:288.20px;width:600.00px;height:0.90px;background:rgba(255,255,255,0.6);"></div><div class="r" style="left:0.00px;top:297.50px;width:600.00px;height:0.90px;background:rgba(255,255,255,0.5);"></div><div class="t" style="left:4.10px;top:291.08px;font-size:5.67px;color:#FFFFFF;font-weight:700;">OUT</div><div class="r" style="left:95.20px;top:297.50px;width:46.73px;height:19.50px;background:#E2EFDA;"></div><div class="r" style="left:141.93px;top:297.50px;width:46.73px;height:19.50px;background:#E2EFDA;"></div><div class="r" style="left:188.66px;top:297.50px;width:46.73px;height:19.50px;background:#E2EFDA;"></div><div class="r" style="left:235.39px;top:297.50px;width:46.73px;height:19.50px;background:#E2EFDA;"></div><div class="r" style="left:562.50px;top:297.50px;width:46.73px;height:19.50px;background:#E2EFDA;"></div><div class="t" style="left:95.20px;width:46.73px;text-align:center;top:305.87px;font-size:5.8px;color:#474747;-webkit-text-stroke:0.05px #474747">Yes</div><div class="t" style="left:141.93px;width:46.73px;text-align:center;top:305.87px;font-size:5.8px;color:#474747;-webkit-text-stroke:0.05px #474747">Yes</div><div class="t" style="left:188.66px;width:46.73px;text-align:center;top:305.87px;font-size:5.8px;color:#474747;-webkit-text-stroke:0.05px #474747">Yes</div><div class="t" style="left:235.39px;width:46.73px;text-align:center;top:305.87px;font-size:5.8px;color:#474747;-webkit-text-stroke:0.05px #474747">Yes</div><div class="t" style="left:562.50px;width:46.73px;text-align:center;top:305.87px;font-size:5.8px;color:#474747;-webkit-text-stroke:0.05px #474747">Yes</div><div class="t" style="left:4.10px;top:305.63px;font-size:6.5px;color:#262626;-webkit-text-stroke:0.12px #262626;width:90.40px;overflow:hidden">Accruent Holdings LLC</div><div class="r" style="left:95.20px;top:317.00px;width:46.73px;height:19.50px;background:#E2EFDA;"></div><div class="r" style="left:141.93px;top:317.00px;width:46.73px;height:19.50px;background:#E2EFDA;"></div><div class="r" style="left:235.39px;top:317.00px;width:46.73px;height:19.50px;background:#E2EFDA;"></div><div class="r" style="left:562.50px;top:317.00px;width:46.73px;height:19.50px;background:#E2EFDA;"></div><div class="t" style="left:95.20px;width:46.73px;text-align:center;top:325.37px;font-size:5.8px;color:#474747;-webkit-text-stroke:0.05px #474747">Yes</div><div class="t" style="left:141.93px;width:46.73px;text-align:center;top:325.37px;font-size:5.8px;color:#474747;-webkit-text-stroke:0.05px #474747">Yes</div><div class="t" style="left:235.39px;width:46.73px;text-align:center;top:325.37px;font-size:5.8px;color:#474747;-webkit-text-stroke:0.05px #474747">Yes</div><div class="t" style="left:562.50px;width:46.73px;text-align:center;top:325.37px;font-size:5.8px;color:#474747;-webkit-text-stroke:0.05px #474747">Yes</div><div class="t" style="left:4.10px;top:325.13px;font-size:6.5px;color:#262626;-webkit-text-stroke:0.12px #262626;width:90.40px;overflow:hidden">Fortive Corp</div><div class="r" style="left:95.20px;top:336.50px;width:46.73px;height:19.50px;background:#E2EFDA;"></div><div class="r" style="left:562.50px;top:336.50px;width:46.73px;height:19.50px;background:#E2EFDA;"></div><div class="t" style="left:95.20px;width:46.73px;text-align:center;top:344.87px;font-size:5.8px;color:#474747;-webkit-text-stroke:0.05px #474747">Yes</div><div class="t" style="left:562.50px;width:46.73px;text-align:center;top:344.87px;font-size:5.8px;color:#474747;-webkit-text-stroke:0.05px #474747">Yes</div><div class="t" style="left:4.10px;top:344.63px;font-size:6.5px;color:#262626;-webkit-text-stroke:0.12px #262626;width:90.40px;overflow:hidden">Infor Global</div><div class="r" style="left:95.20px;top:356.00px;width:46.73px;height:19.50px;background:#E2EFDA;"></div><div class="r" style="left:562.50px;top:356.00px;width:46.73px;height:19.50px;background:#E2EFDA;"></div><div class="t" style="left:95.20px;width:46.73px;text-align:center;top:364.37px;font-size:5.8px;color:#474747;-webkit-text-stroke:0.05px #474747">Yes</div><div class="t" style="left:562.50px;width:46.73px;text-align:center;top:364.37px;font-size:5.8px;color:#474747;-webkit-text-stroke:0.05px #474747">Yes</div><div class="t" style="left:4.10px;top:364.13px;font-size:6.5px;color:#262626;-webkit-text-stroke:0.12px #262626;width:90.40px;overflow:hidden">Matrix42 AG</div><div class="r" style="left:94.20px;top:0.00px;width:1.60px;height:400.00px;background:rgba(150,150,150,0.42);"></div></div>
</div></body></html>
